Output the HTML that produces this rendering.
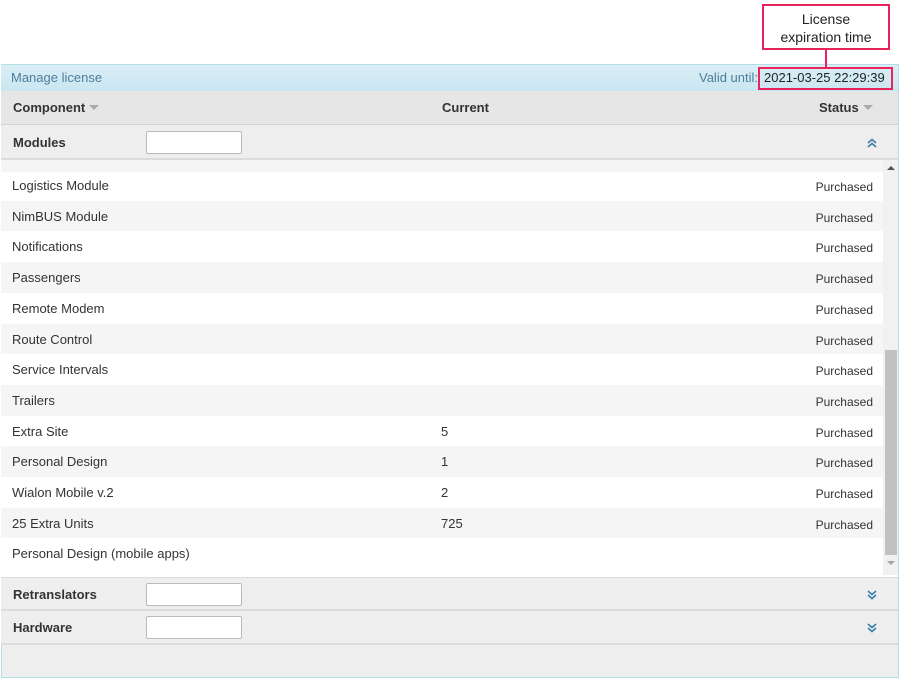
<!DOCTYPE html>
<html><head><style>
*{box-sizing:border-box;margin:0;padding:0}
body{width:900px;height:679px;background:#fff;font-family:"Liberation Sans",Arial,sans-serif;position:relative;overflow:hidden;color:#333}
.abs{position:absolute}
.panel{left:1px;top:64px;width:898px;height:614px;border:1px solid #b5dde8;background:#eee}
.hdr{left:1px;top:65px;width:897px;height:26px;background:linear-gradient(#dbeef6,#c9e6f2);font-size:13px;color:#4d7e9b}
.colh{left:1px;top:91px;width:897px;height:34px;background:#e6e6e6;border-bottom:1px solid #d2d2d2;font-size:13px;font-weight:bold;color:#333}
.grp{left:1px;width:897px;height:34px;background:#eee;border-bottom:2px solid #dcdcdc;font-size:13px;font-weight:bold;color:#333}
.inp{position:absolute;left:145px;top:5px;width:96px;height:23px;border:1px solid #bbb;border-radius:2px;background:#fff}
.row{position:absolute;left:0;width:882px;height:30.7px;font-size:13px;color:#333}
.row span{position:absolute;top:8px}
.row .s{right:10px;font-size:12px;top:10px}
.g{background:#f5f5f5}
.tri{display:inline-block;width:0;height:0;border-left:5px solid transparent;border-right:5px solid transparent;border-top:5px solid #aaa;margin-left:4px;vertical-align:2px}
</style></head><body>
<div class="abs panel"></div>
<div class="abs hdr"><span class="abs" style="left:10px;top:5px">Manage license</span><span class="abs" style="left:698px;top:5px">Valid until:</span><span class="abs" style="left:763px;top:5px;color:#222">2021-03-25 22:29:39</span></div>
<div class="abs" style="left:758px;top:67px;width:135px;height:23px;border:2px solid #e8245a"></div>
<div class="abs" style="left:762px;top:4px;width:128px;height:46px;border:2px solid #e8245a;background:#fff;text-align:center;font-size:14px;line-height:18px;padding-top:4px;color:#222">License<br>expiration time</div>
<div class="abs" style="left:825px;top:50px;width:2px;height:17px;background:#e8245a"></div>
<div class="abs colh"><span class="abs" style="left:12px;top:9px">Component<i class="tri"></i></span><span class="abs" style="left:441px;top:9px">Current</span><span class="abs" style="left:818px;top:9px">Status<i class="tri"></i></span></div>
<div class="abs grp" style="top:126px"><span class="abs" style="left:12px;top:9px">Modules</span><div class="inp"></div>
<svg class="abs" style="left:866px;top:12px" width="10" height="10" viewBox="0 0 10 10"><path d="M1 5L5 1.5L9 5M1 9L5 5.5L9 9" fill="none" stroke="#3b7dab" stroke-width="1.6"/></svg></div>
<div class="abs" style="left:1px;top:160px;width:897px;height:417px;background:#fff">
<div class="abs g" style="left:0;top:0;width:882px;height:12px"></div>
<div class="row" style="top:10px"><span style="left:11px">Logistics Module</span><span class="s">Purchased</span></div>
<div class="row g" style="top:40.7px"><span style="left:11px">NimBUS Module</span><span class="s">Purchased</span></div>
<div class="row" style="top:71.4px"><span style="left:11px">Notifications</span><span class="s">Purchased</span></div>
<div class="row g" style="top:102.1px"><span style="left:11px">Passengers</span><span class="s">Purchased</span></div>
<div class="row" style="top:132.8px"><span style="left:11px">Remote Modem</span><span class="s">Purchased</span></div>
<div class="row g" style="top:163.5px"><span style="left:11px">Route Control</span><span class="s">Purchased</span></div>
<div class="row" style="top:194.2px"><span style="left:11px">Service Intervals</span><span class="s">Purchased</span></div>
<div class="row g" style="top:224.9px"><span style="left:11px">Trailers</span><span class="s">Purchased</span></div>
<div class="row" style="top:255.6px"><span style="left:11px">Extra Site</span><span style="left:440px">5</span><span class="s">Purchased</span></div>
<div class="row g" style="top:286.3px"><span style="left:11px">Personal Design</span><span style="left:440px">1</span><span class="s">Purchased</span></div>
<div class="row" style="top:317px"><span style="left:11px">Wialon Mobile v.2</span><span style="left:440px">2</span><span class="s">Purchased</span></div>
<div class="row g" style="top:347.7px"><span style="left:11px">25 Extra Units</span><span style="left:440px">725</span><span class="s">Purchased</span></div>
<div class="row" style="top:378.4px"><span style="left:11px">Personal Design (mobile apps)</span></div>
<div class="abs" style="left:882px;top:0;width:15px;height:415px;background:#f1f1f1"></div>
<div class="abs" style="left:884px;top:190px;width:12px;height:205px;background:#c1c1c1"></div>
<div class="abs" style="left:886px;top:6px;width:0;height:0;border-left:4px solid transparent;border-right:4px solid transparent;border-bottom:4px solid #505050"></div>
<div class="abs" style="left:886px;top:401px;width:0;height:0;border-left:4px solid transparent;border-right:4px solid transparent;border-top:4px solid #a3a3a3"></div>
</div>
<div class="abs grp" style="top:577px;border-top:1px solid #dcdcdc"><span class="abs" style="left:12px;top:9px">Retranslators</span><div class="inp"></div>
<svg class="abs" style="left:866px;top:12px" width="10" height="10" viewBox="0 0 10 10"><path d="M1 1L5 4.5L9 1M1 5L5 8.5L9 5" fill="none" stroke="#3b7dab" stroke-width="1.6"/></svg></div>
<div class="abs grp" style="top:611px"><span class="abs" style="left:12px;top:9px">Hardware</span><div class="inp"></div>
<svg class="abs" style="left:866px;top:12px" width="10" height="10" viewBox="0 0 10 10"><path d="M1 1L5 4.5L9 1M1 5L5 8.5L9 5" fill="none" stroke="#3b7dab" stroke-width="1.6"/></svg></div>
</body></html>
